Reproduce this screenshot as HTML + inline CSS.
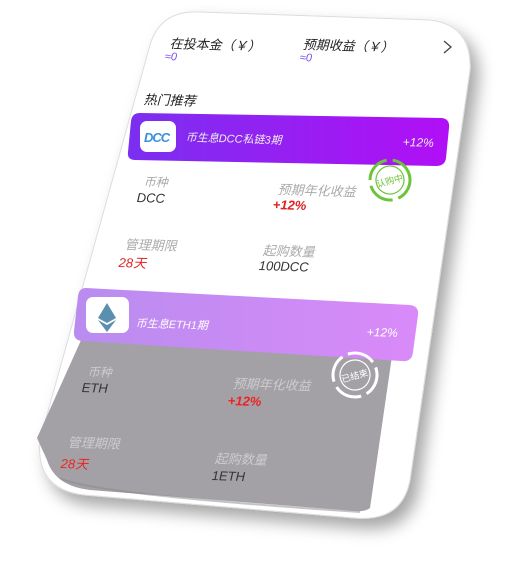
<!DOCTYPE html>
<html><head><meta charset="utf-8"><style>
body{margin:0;width:515px;height:562px;background:#fff;position:relative;overflow:hidden;font-family:"Liberation Sans","Noto Sans CJK SC",sans-serif;font-style:italic}
.t{position:absolute;white-space:nowrap;transform:rotate(1.8deg);transform-origin:left top}
</style></head><body>
<svg width="515" height="562" style="position:absolute;left:0;top:0">
<defs>
<filter id="sh" x="-20%" y="-20%" width="140%" height="140%"><feDropShadow dx="8" dy="10" stdDeviation="8" flood-color="#000" flood-opacity="0.35"/></filter>
<linearGradient id="g1" x1="0" x2="1"><stop offset="0" stop-color="#7b2ff0"/><stop offset="1" stop-color="#b10ff5"/></linearGradient>
<linearGradient id="g2" x1="0" x2="1"><stop offset="0" stop-color="#b98cf0"/><stop offset="1" stop-color="#d98af8"/></linearGradient>
</defs>
<path filter="url(#sh)" d="M200 12 L430 20 Q472 25 470 70 L410 480 Q402 522 355 518 L85 495 Q35 490 40 440 L150 45 Q160 10 200 12 Z" fill="#fff" stroke="#ddd" stroke-width="1"/>
<path d="M82 338 L392 356 L370 508 Q365 512 355 511 L90 490 Q55 486 47 460 L37 438 Z" fill="#a4a1a6"/>
<path d="M60 478 Q90 494 360 512" stroke="#888" stroke-width="2" fill="none" opacity=".5"/>
<path d="M140 113 L442 118 Q450 119 449 128 L446 158 Q445 166 436 166 L135 160 Q127 160 128 152 L131 121 Q132 113 140 113 Z" fill="url(#g1)"/>
<path d="M86 288 L410 305 Q419 306 418 315 L413 352 Q412 362 402 361 L82 341 Q73 340 74 331 L78 296 Q79 288 86 288 Z" fill="url(#g2)"/>
<rect x="140" y="121" width="36" height="31" rx="7" fill="#fff"/>
<text x="144" y="142" font-size="13" fill="#3a8fe0" font-family="Liberation Sans" font-weight="bold" letter-spacing="-1">DCC</text>
<rect x="86" y="297" width="43" height="36" rx="7" fill="#fff"/>
<path d="M107 303 L98 318 L107 323 L116 318 Z M98 320 L107 332 L116 320 L107 325 Z" fill="#5a8fb0"/>
<g transform="rotate(-15 390 180)">
<circle cx="390" cy="180" r="20" fill="none" stroke="#6cc43a" stroke-width="3" stroke-dasharray="28 6"/>
<circle cx="390" cy="180" r="14" fill="none" stroke="#6cc43a" stroke-width="1.2"/>
<text x="376" y="184" font-size="9" fill="#6cc43a" font-style="normal">认购中</text>
</g>
<g transform="rotate(-15 355 375)">
<circle cx="355" cy="375" r="22" fill="none" stroke="#fff" stroke-width="3" stroke-dasharray="28 6"/>
<circle cx="355" cy="375" r="15" fill="none" stroke="#fff" stroke-width="1.2"/>
<text x="341" y="379" font-size="9" fill="#fff" font-style="normal">已结束</text>
</g>
<path d="M444 41 L451 47 L444 53" stroke="#444" stroke-width="1.3" fill="none"/>
</svg>
<div class="t" style="left:170px;top:33px;font-size:13px;color:#222">在投本金（￥）</div>
<div class="t" style="left:303px;top:34px;font-size:13px;color:#222">预期收益（￥）</div>
<div class="t" style="left:165px;top:51px;font-size:11px;color:#7a4be8">≈0</div>
<div class="t" style="left:300px;top:52px;font-size:11px;color:#7a4be8">≈0</div>
<div class="t" style="left:144px;top:89px;font-size:13px;color:#222">热门推荐</div>
<div class="t" style="left:186px;top:129px;font-size:11px;color:#eee">币生息DCC私链3期</div>
<div class="t" style="left:403px;top:135px;font-size:12px;color:#eee">+12%</div>
<div class="t" style="left:144px;top:173px;font-size:12px;color:#aaa">币种</div>
<div class="t" style="left:137px;top:190px;font-size:13px;color:#333">DCC</div>
<div class="t" style="left:278px;top:179px;font-size:13px;color:#aaa">预期年化收益</div>
<div class="t" style="left:273px;top:197px;font-size:13px;color:#d22;font-weight:bold">+12%</div>
<div class="t" style="left:125px;top:234px;font-size:13px;color:#aaa">管理期限</div>
<div class="t" style="left:119px;top:252px;font-size:13px;color:#d22">28天</div>
<div class="t" style="left:263px;top:240px;font-size:13px;color:#aaa">起购数量</div>
<div class="t" style="left:259px;top:258px;font-size:13px;color:#333">100DCC</div>
<div class="t" style="left:136px;top:315px;font-size:11px;color:#fff">币生息ETH1期</div>
<div class="t" style="left:367px;top:325px;font-size:12px;color:#fff">+12%</div>
<div class="t" style="left:88px;top:363px;font-size:12px;color:#ccc">币种</div>
<div class="t" style="left:82px;top:380px;font-size:13px;color:#333">ETH</div>
<div class="t" style="left:233px;top:373px;font-size:13px;color:#ccc">预期年化收益</div>
<div class="t" style="left:228px;top:393px;font-size:13px;color:#e22;font-weight:bold">+12%</div>
<div class="t" style="left:68px;top:432px;font-size:13px;color:#ccc">管理期限</div>
<div class="t" style="left:61px;top:453px;font-size:13px;color:#e22">28天</div>
<div class="t" style="left:215px;top:448px;font-size:13px;color:#ccc">起购数量</div>
<div class="t" style="left:212px;top:468px;font-size:13px;color:#333">1ETH</div>
</body></html>
